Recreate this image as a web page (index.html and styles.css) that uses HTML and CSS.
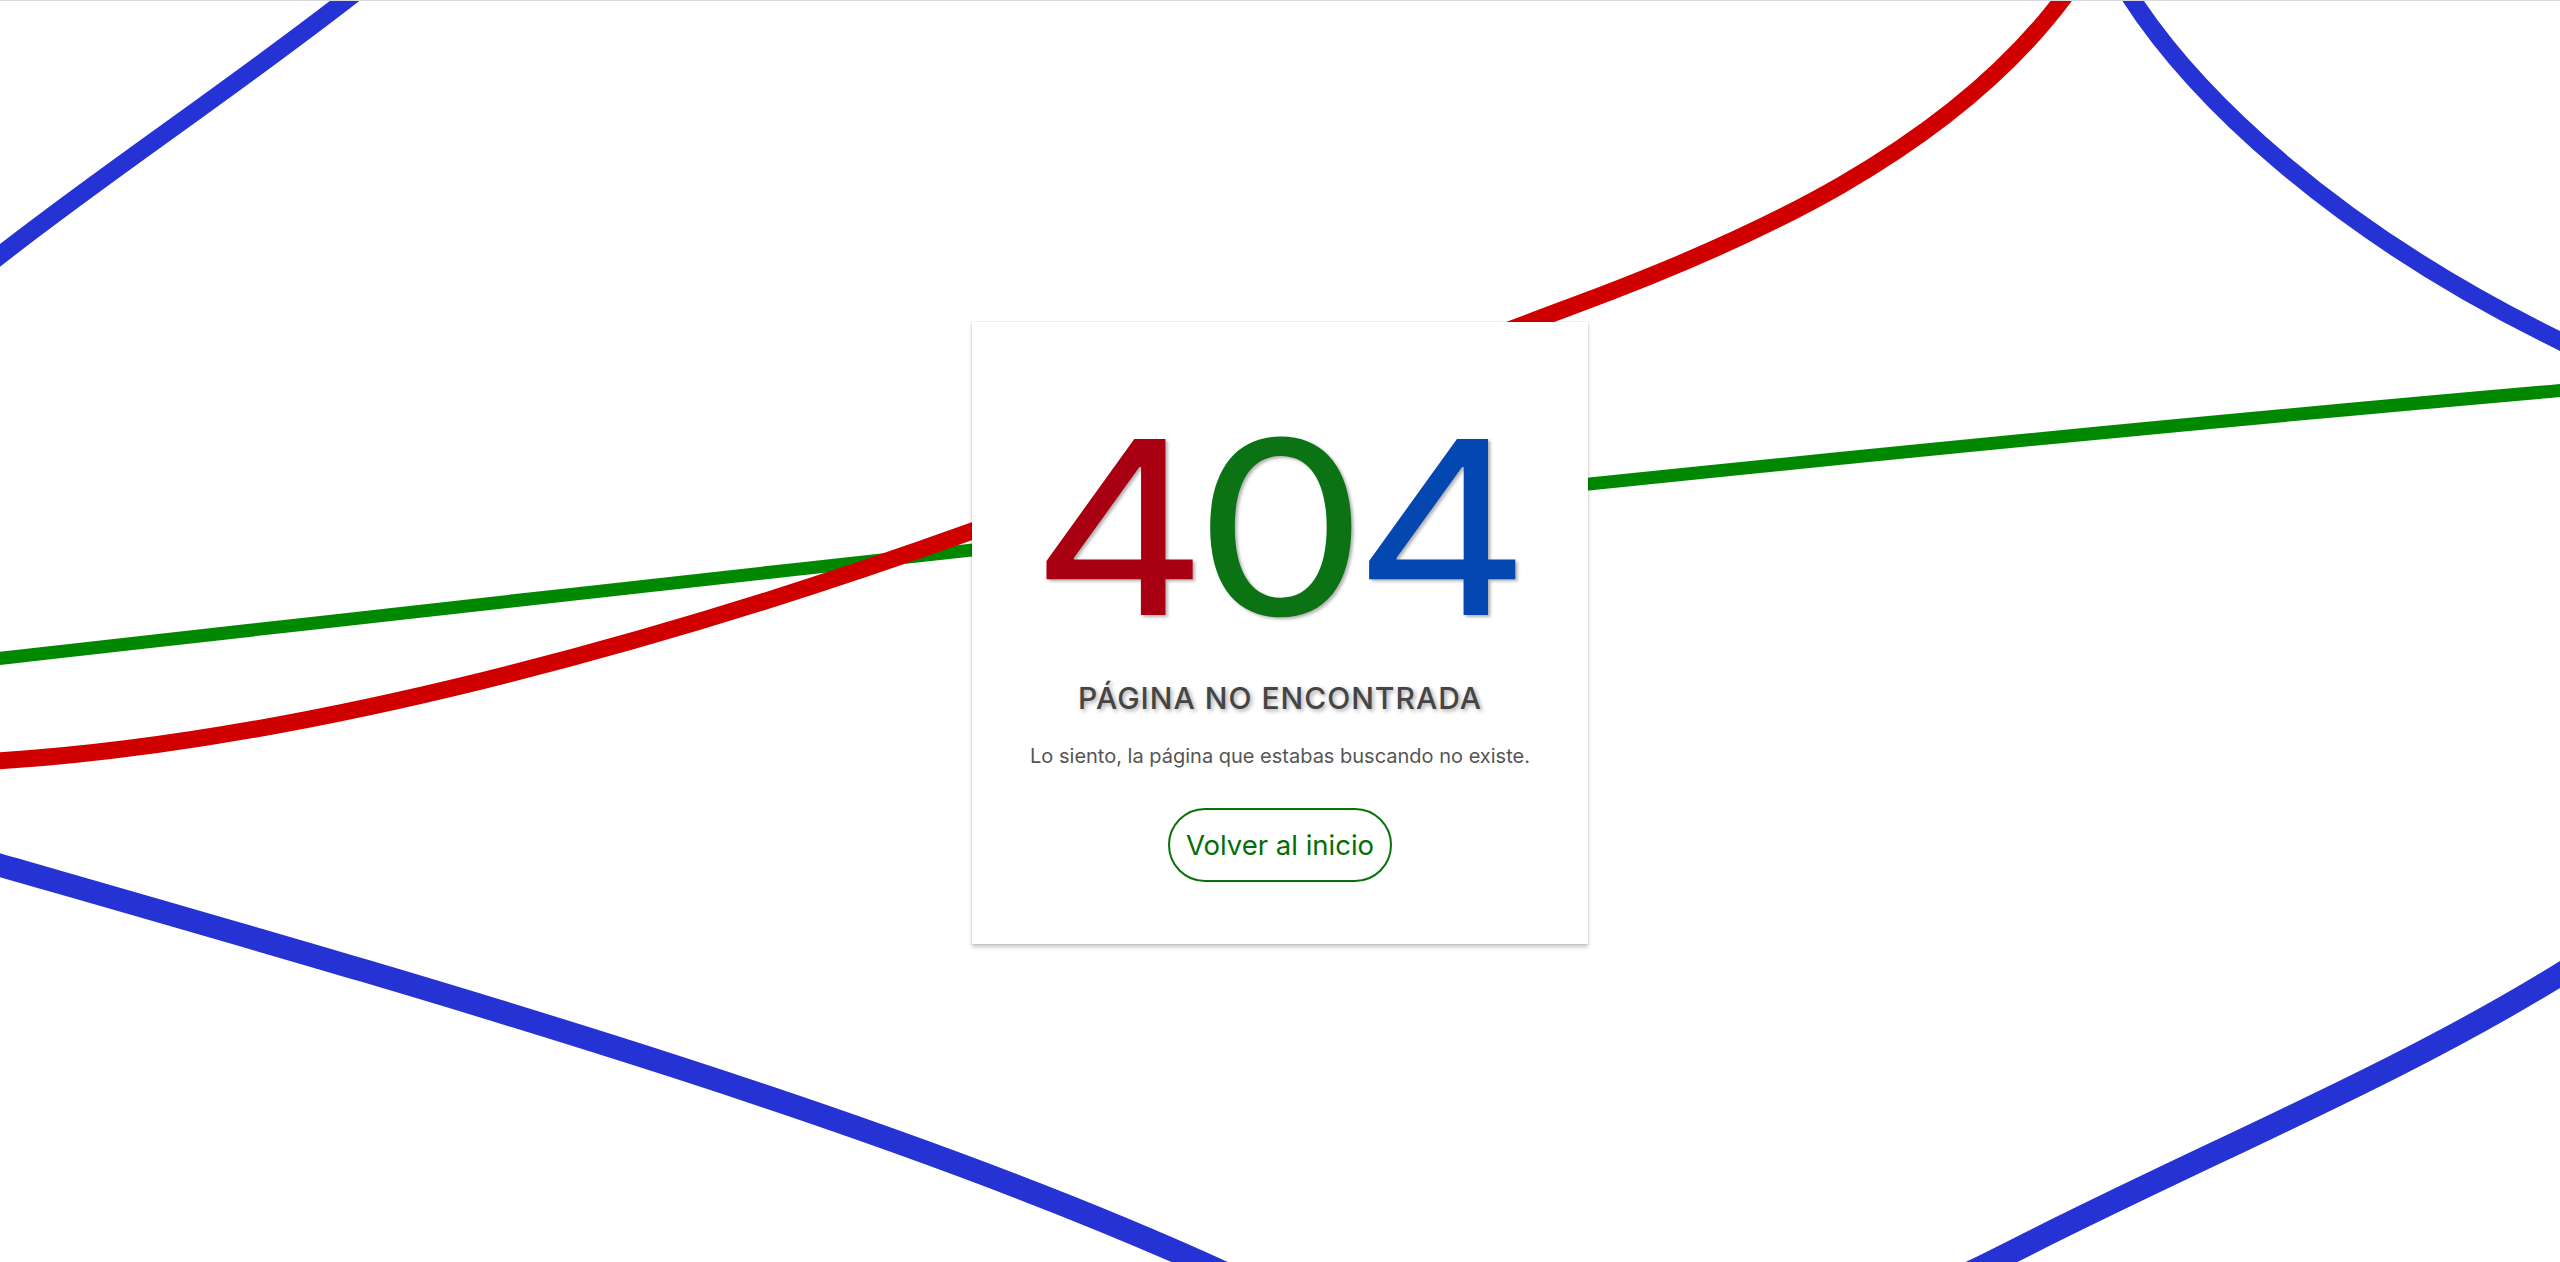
FILE: index.html
```html
<!DOCTYPE html>
<html lang="es">
<head>
<meta charset="utf-8">
<title>Página no encontrada</title>
<link rel="stylesheet" href="styles.css">
</head>
<body>
<div class="page">
  <svg class="bg-lines" viewBox="0 0 2560 1262" preserveAspectRatio="none" aria-hidden="true">
    <path class="line blue" d="M -12 264 C 100 175, 230 90, 360 -12"/>
    <path class="line blue" d="M 2128 -8 C 2190 90, 2330 230, 2570 345"/>
    <path class="line blue thick" d="M -10 862 C 400 980, 900 1120, 1250 1285 C 1550 1426, 1850 1335, 2000 1258 C 2200 1155, 2400 1075, 2570 968"/>
    <path class="line green" d="M -10 659 C 800 568, 1700 465, 2570 389"/>
    <path class="line red" d="M -10 761 C 300 743, 671 639, 971 531 C 1150 466, 1400 370, 1568 307 C 1750 240, 1950 150, 2065 -5"/>
  </svg>
  <main class="card">
    <h1 class="code"><span class="code-inner"><span class="d-red">4</span><span class="d-green">0</span><span class="d-blue">4</span></span></h1>
    <h2 class="title">PÁGINA NO ENCONTRADA</h2>
    <p class="msg">Lo siento, la página que estabas buscando no existe.</p>
    <a class="btn" href="#">Volver al inicio</a>
  </main>
</div>
</body>
</html>
```

FILE: styles.css
```css
html, body {
  margin: 0;
  height: 100%;
}

body {
  background: #ffffff;
  font-family: Inter, "Liberation Sans", sans-serif;
  border-top: 1px solid #d9dade;
  box-sizing: border-box;
}

.page {
  position: relative;
  min-height: 100%;
  display: flex;
  align-items: center;
  justify-content: center;
  overflow: hidden;
  padding-top: 2px;
  box-sizing: border-box;
}

.bg-lines {
  position: absolute;
  top: 0;
  left: 0;
  width: 100%;
  height: 100%;
  z-index: 0;
}

.line {
  fill: none;
  stroke-linecap: butt;
}

.blue {
  stroke: #2633d4;
  stroke-width: 18;
}

.blue.thick {
  stroke-width: 23;
}

.green {
  stroke: #008800;
  stroke-width: 13;
}

.red {
  stroke: #d10000;
  stroke-width: 17;
}

.card {
  position: relative;
  z-index: 1;
  width: 616px;
  box-sizing: border-box;
  padding: 84px 20px 62px;
  display: flex;
  flex-direction: column;
  align-items: center;
  background: #ffffff;
  box-shadow: 0 0 0 1px rgba(0, 0, 0, 0.05), 0 3px 4px rgba(0, 0, 0, 0.22);
  text-align: center;
}

.code {
  margin: 0;
  font-size: 242px;
  line-height: 1;
  font-weight: 400;
  text-shadow: 2px 2px 3px rgba(0, 0, 0, 0.3);
}

.code-inner {
  display: inline-block;
  letter-spacing: -13px;
  padding-right: 12px;
  transform: scaleX(1.14);
}

.d-red { color: #a80012; }
.d-green { color: #0b7314; }
.d-blue { color: #0447b0; }

.title {
  margin: 32px 0 0;
  font-size: 30px;
  line-height: 36px;
  font-weight: 500;
  letter-spacing: 1px;
  color: #454545;
  text-shadow: 2px 2px 4px rgba(0, 0, 0, 0.35);
}

.msg {
  margin: 25px 0 0;
  font-size: 20px;
  line-height: 30px;
  color: #555555;
}

.btn {
  margin-top: 37px;
  display: inline-flex;
  align-items: center;
  height: 74px;
  box-sizing: border-box;
  padding: 0 16px;
  border: 2px solid #077207;
  border-radius: 40px;
  color: #056d05;
  font-size: 27.5px;
  text-decoration: none;
}
```
